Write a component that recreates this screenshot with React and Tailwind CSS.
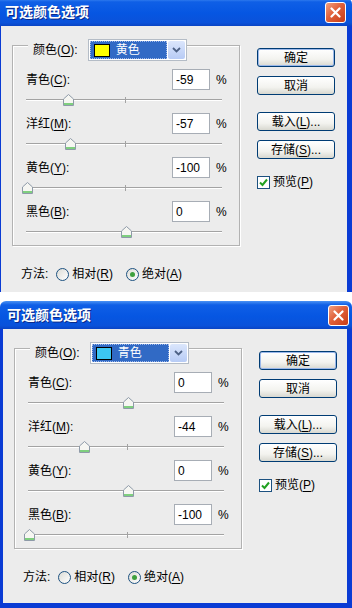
import React from "react";

const FONT = "font-[Liberation_Sans,Noto_Sans_CJK_SC,sans-serif]";

function Acc({ children }) {
  return <span className="underline underline-offset-2">{children}</span>;
}

function Thumb() {
  return (
    <svg width="11" height="12" viewBox="0 0 11 12">
      <path d="M0.5 5 L5.5 0.5 L10.5 5 V11.5 H0.5 Z" fill="#f6f6f2" stroke="#8e9aa8" />
      <rect x="1" y="9" width="9" height="2" fill="#7fcf7f" />
    </svg>
  );
}

function Slider({ value }) {
  const left = (value + 100) * 0.99 - 4;
  return (
    <div className="relative h-[23px] mr-[17px]">
      <div className="absolute left-0 right-0 top-[9px] h-[2px] border-t border-[#a3a3a3] bg-white" />
      <div className="absolute left-[99px] top-[7px] h-[6px] w-px bg-[#a3a3a3]" />
      <div className="absolute top-[4px]" style={{ left }}>
        <Thumb />
      </div>
    </div>
  );
}

function Row({ name, letter, value }) {
  return (
    <div>
      <div className="flex h-[21px] items-center pr-[7px]">
        <span className="flex-1 text-[12px] text-black">
          {name}(<Acc>{letter}</Acc>):
        </span>
        <div className="flex h-[21px] w-[38px] items-center border border-[#a7adb5] bg-white pl-[3px] text-[12px] text-black">
          {value}
        </div>
        <span className="ml-[6px] w-[16px] text-[12px] text-black">%</span>
      </div>
      <Slider value={value} />
    </div>
  );
}

function Btn({ children, primary }) {
  return (
    <div
      className={`flex h-[19px] w-[78px] items-center justify-center rounded-[3px] border border-[#003c74] bg-[linear-gradient(180deg,#ffffff_0%,#f3f3ef_60%,#d8d8d0_100%)] text-[12px] text-black ${
        primary ? "shadow-[inset_0_0_0_1px_#9bb8ea]" : ""
      }`}
    >
      {children}
    </div>
  );
}

function Radio({ checked }) {
  return (
    <span className="flex h-[13px] w-[13px] items-center justify-center rounded-full border border-[#1c5180] bg-[linear-gradient(135deg,#dcdcd6,#ffffff)]">
      {checked && <span className="h-[5px] w-[5px] rounded-full bg-[#3ea03e]" />}
    </span>
  );
}

function Dialog({ width, closeMr, swatch, colorName, values }) {
  const rows = [
    ["青色", "C"],
    ["洋红", "M"],
    ["黄色", "Y"],
    ["黑色", "B"],
  ];
  return (
    <div className={`flex h-full flex-col ${FONT}`} style={{ width }}>
      {/* title bar */}
      <div className="flex h-[28px] shrink-0 items-center rounded-t-[6px] bg-[linear-gradient(180deg,#4a92f4_0%,#0f5fe6_14%,#0656e2_55%,#0a52da_88%,#0a44c4_100%)] pl-[7px]">
        <span className="flex-1 text-[14px] font-bold text-white [text-shadow:1px_1px_0_#0a2a8a]">
          可选颜色选项
        </span>
        <div
          className="flex h-[21px] w-[21px] items-center justify-center rounded-[3px] border border-white bg-[linear-gradient(135deg,#f0a080_0%,#e0603a_45%,#c83c16_100%)]"
          style={{ marginRight: closeMr }}
        >
          <svg width="11" height="11" viewBox="0 0 11 11">
            <path d="M1.5 1.5 L9.5 9.5 M9.5 1.5 L1.5 9.5" stroke="#fff" strokeWidth="2.2" strokeLinecap="round" />
          </svg>
        </div>
      </div>

      {/* body */}
      <div className="flex flex-1 border-b-[5px] border-l-[3px] border-r-[5px] border-[#0a3bd4] bg-[#ececec]">
        <div className="ml-[11px] flex w-[228px] flex-col">
          <div className="relative mt-[19px] border border-[#b2b2b2] pl-[13px] pt-[23px] shadow-[inset_1px_1px_0_#fff,1px_1px_0_#fff]">
            {/* legend */}
            <div className="absolute left-[15px] top-[-7px] flex items-center bg-[#ececec] pl-[5px]">
              <span className="mr-[10px] text-[12px] text-black">
                颜色(<Acc>O</Acc>):
              </span>
              <div className="flex h-[22px] w-[99px] items-center border border-[#b4bcc6] bg-white p-[1px]">
                <div className="flex h-full flex-1 items-center bg-[#316ac5] pl-[4px] outline-1 outline-dotted outline-offset-[-1px] outline-[#a0b8e8]">
                  <span className="h-[13px] w-[16px] border border-black" style={{ background: swatch }} />
                  <span className="ml-[6px] text-[12px] text-white">{colorName}</span>
                </div>
                <div className="ml-[1px] flex h-full w-[17px] items-center justify-center rounded-[2px] bg-[linear-gradient(180deg,#dbe6fc,#b7cbf5)]">
                  <svg width="9" height="6" viewBox="0 0 9 6">
                    <path d="M1 1 L4.5 4.5 L8 1" fill="none" stroke="#4d6185" strokeWidth="1.8" />
                  </svg>
                </div>
              </div>
            </div>
            {rows.map(([n, l], i) => (
              <Row key={n} name={n} letter={l} value={values[i]} />
            ))}
          </div>
          <div className="mt-[18px] flex h-[20px] items-center pl-[9px] text-[12px] text-black">
            <span>方法:</span>
            <span className="ml-[8px]">
              <Radio />
            </span>
            <span className="ml-[3px]">
              相对(<Acc>R</Acc>)
            </span>
            <span className="ml-[13px]">
              <Radio checked />
            </span>
            <span className="ml-[3px]">
              绝对(<Acc>A</Acc>)
            </span>
          </div>
        </div>

        <div className="ml-[17px] mt-[22px] flex flex-col">
          <Btn primary>确定</Btn>
          <div className="mt-[9px]">
            <Btn>取消</Btn>
          </div>
          <div className="mt-[17px]">
            <Btn>
              载入(<Acc>L</Acc>)...
            </Btn>
          </div>
          <div className="mt-[9px]">
            <Btn>
              存储(<Acc>S</Acc>)...
            </Btn>
          </div>
          <div className="mt-[14px] flex items-center text-[12px] text-black">
            <span className="flex h-[13px] w-[13px] items-center justify-center border border-[#1c5180] bg-white">
              <svg width="9" height="9" viewBox="0 0 9 9">
                <path d="M1 4.5 L3.5 7 L8 1.5" fill="none" stroke="#21a121" strokeWidth="2" />
              </svg>
            </span>
            <span className="ml-[3px]">
              预览(<Acc>P</Acc>)
            </span>
          </div>
        </div>
      </div>
    </div>
  );
}

export default function App() {
  return (
    <div className="h-[608px] w-[352px] overflow-hidden bg-white">
      <div className="h-[292px] overflow-hidden">
        <div className="-ml-[2px] -mt-[2px] h-[320px]">
          <Dialog width={354} closeMr={6} swatch="#ffff00" colorName="黄色" values={[-59, -57, -100, 0]} />
        </div>
      </div>
      <div className="mt-[9px] h-[307px]">
        <Dialog width={352} closeMr={3} swatch="#3cc6f2" colorName="青色" values={[0, -44, 0, -100]} />
      </div>
    </div>
  );
}
